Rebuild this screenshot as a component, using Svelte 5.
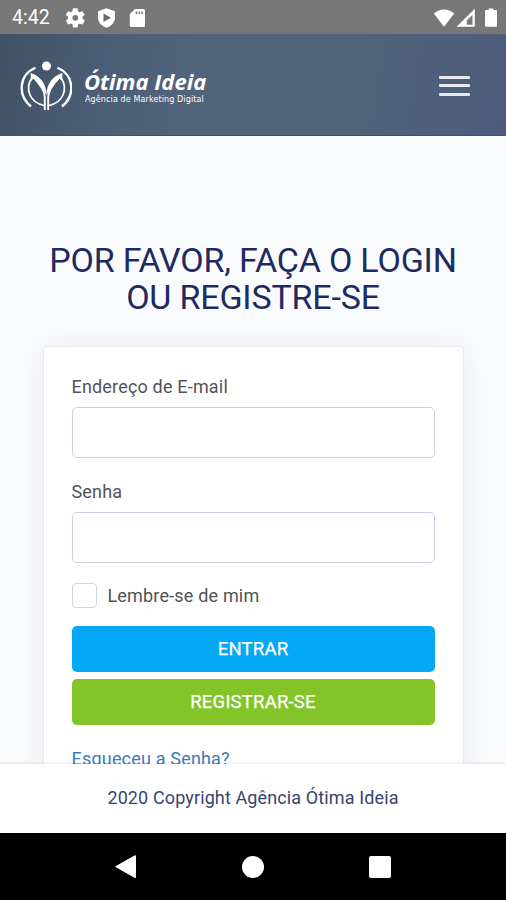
<script lang="ts">
	let email = $state('');
	let password = $state('');
	let remember = $state(false);
</script>

<div class="screen">
	<div class="status">
		<span class="clock">4:42</span>
		<svg class="status-left" width="82" height="22" viewBox="0 0 82 22" fill="#fff">
			<g transform="translate(-1.2 -.7) scale(.96)">
				<path fill-rule="evenodd" d="M19.4 13a7.500 7.500 0 0 0 0-2l2.100-1.600c.2-.2.2-.4.1-.6l-2-3.500c-.1-.2-.4-.3-.6-.2l-2.500 1a7.300 7.300 0 0 0-1.700-1l-.4-2.600c0-.3-.2-.5-.5-.5h-4c-.2 0-.4.200-.5.4l-.4 2.700a7.700 7.700 0 0 0-1.700 1l-2.500-1c-.2-.1-.5 0-.6.2l-2 3.500c-.1.200 0 .5.1.6L4.500 11a7.900 7.900 0 0 0 0 2l-2.100 1.600c-.2.200-.2.4-.1.600l2 3.500c.1.200.4.300.6.200l2.500-1a7.300 7.300 0 0 0 1.700 1l.4 2.600c0 .3.300.5.5.5h4c.3 0 .5-.2.500-.5l.4-2.600a7.700 7.700 0 0 0 1.700-1l2.500 1c.2.1.5 0 .6-.2l2-3.500c.1-.2.1-.5-.1-.6zM12 15a3 3 0 1 1 0-6 3 3 0 0 1 0 6z" />
			</g>
			<path d="M41.500 1.200l8.500 3v6.300c0 4.700-3.400 8.400-8.500 10.200-5.100-1.800-8.500-5.500-8.500-10.200V4.200z" />
			<path fill="#6b6b6b" d="M38.500 6.500l7.500 4.300-7.500 4.300z" />
			<path fill-rule="evenodd" d="M70 2h8.500q1.500 0 1.500 1.500v15q0 1.500-1.500 1.500H66.300q-1.500 0-1.500-1.500V7zM70.700 4.500v2.500h1.500V4.500zM73.500 4.500v2.500h1.500V4.500zM76.300 4.500v2.500h1.500V4.500z" />
		</svg>
		<svg class="status-right" width="64" height="22" viewBox="0 0 64 22" fill="#fff">
			<path d="M.8 6.600Q11 -1.800 21.300 6.600L11 19.800z" />
			<path fill-rule="evenodd" d="M23.500 19.800L41.800 1.800v18zM33.800 17.800h5.700V8l-5.700 5.500z" />
			<path d="M53 3h2.700V1.500h4.600V3H63q1 0 1 1v14.800q0 1-1 1H53q-1 0-1-1V4q0-1 1-1z" />
		</svg>
	</div>

	<header>
		<a class="brand" href="#home" aria-label="Ótima Ideia">
			<svg width="52" height="50" viewBox="0 0 52 50" fill="none" stroke="#fff">
				<circle cx="26.500" cy="5" r="4.500" fill="#fff" stroke="none" />
				<path stroke-width="2.300" d="M15.500 6.700C-1.500 14-2.500 34.500 11 45.500M37.500 6.700C54.500 14 55.500 34.500 42 45.500" />
				<path stroke-width="1.700" d="M11.800 17C4.500 28 10 41.500 24 44.500M41.200 17C48.500 28 43 41.500 29 44.500" />
				<path stroke-width="1.900" d="M24.800 49V36C24.800 29 20 23 13.500 16M28.200 49V36C28.200 29 33 23 39.500 16" />
				<path fill="#fff" stroke="none" d="M10.500 12C20 14.500 26.500 23 26.500 34 23.500 27.500 18 23 13.500 17.500L11 20zM42.500 12C33 14.500 26.500 23 26.500 34 29.500 27.500 35 23 39.500 17.500L42 20z" />
			</svg>
			<span class="wordmark">
				<span class="name">Ótima Ideia</span>
				<span class="tagline">Agência de Marketing Digital</span>
			</span>
		</a>
		<button class="menu" aria-label="Menu"><i></i><i></i><i></i></button>
	</header>

	<main>
		<h1>POR FAVOR, FAÇA O LOGIN<br />OU REGISTRE-SE</h1>
		<form onsubmit={(e) => e.preventDefault()}>
			<label for="email">Endereço de E-mail</label>
			<input class="field" id="email" type="email" bind:value={email} />
			<label for="password">Senha</label>
			<input class="field" id="password" type="password" bind:value={password} />
			<label class="remember">
				<input type="checkbox" bind:checked={remember} />
				<span>Lembre-se de mim</span>
			</label>
			<button class="btn enter">ENTRAR</button>
			<button class="btn register" type="button">REGISTRAR-SE</button>
			<a class="forgot" href="#forgot">Esqueceu a Senha?</a>
		</form>
	</main>

	<footer><span>2020 Copyright Agência Ótima Ideia</span></footer>

	<nav>
		<svg width="22" height="26" viewBox="0 0 22 26"><path fill="#fff" d="M1.300 11.800L19.500 1.500Q21 .8 21 2.500v20.400q0 1.700-1.500.9L1.300 13.600q-1.600-.9 0-1.800z" /></svg>
		<i class="home"></i>
		<i class="recent"></i>
	</nav>
</div>

<style>
	:global(body) {
		margin: 0;
	}
	.screen {
		display: flex;
		flex-direction: column;
		width: 506px;
		height: 900px;
		overflow: hidden;
		font-family: Roboto, sans-serif;
		background: #fafbfd;
	}
	.screen * {
		box-sizing: border-box;
	}
	.status {
		display: flex;
		align-items: center;
		flex: 0 0 34px;
		padding: 1px 9px 0 12px;
		background: #777;
		color: #fff;
	}
	.clock {
		width: 53px;
		font-size: 19.5px;
		line-height: 32px;
	}
	.status-right {
		margin-left: auto;
	}
	header {
		display: flex;
		align-items: center;
		justify-content: space-between;
		flex: 0 0 102px;
		padding: 2px 36px 0 20px;
		background: linear-gradient(100deg, #415165 0%, #4b5d76 20%, #52647c 38%, #52647c 65%, #4d5b7a 100%);
		border-bottom: 1px solid #43526a;
	}
	.brand {
		display: flex;
		align-items: center;
		gap: 12px;
		color: #fff;
		text-decoration: none;
	}
	.wordmark {
		display: flex;
		flex-direction: column;
		white-space: nowrap;
	}
	.name {
		font: italic 700 22px/26px "Open Sans", sans-serif;
	}
	.tagline {
		padding: 2px 0 0 1px;
		font: 400 8px/8px "DejaVu Sans", sans-serif;
		letter-spacing: 0.12px;
	}
	.menu {
		display: flex;
		flex-direction: column;
		gap: 5.500px;
		padding: 0;
		border: 0;
		background: none;
	}
	.menu i {
		width: 31px;
		height: 3px;
		border-radius: 1px;
		background: #e6eaf0;
	}
	main {
		display: flex;
		flex: 1;
		flex-direction: column;
		align-items: center;
		min-height: 0;
		padding-top: 106px;
		overflow: hidden;
	}
	h1 {
		flex: none;
		margin: 0 0 30px;
		color: #1d2b62;
		font-size: 34px;
		font-weight: 400;
		line-height: 37px;
		letter-spacing: -0.18px;
		text-align: center;
		white-space: nowrap;
	}
	form {
		display: flex;
		flex: none;
		flex-direction: column;
		width: 421px;
		height: 470px;
		padding: 27px 28px;
		border: 1px solid #e9ebed;
		border-radius: 4px;
		background: #fff;
		box-shadow: 0 0 34px rgba(30, 40, 60, 0.07);
	}
	label {
		color: #505356;
		font-size: 18px;
		line-height: 26px;
		letter-spacing: 0.18px;
		white-space: nowrap;
	}
	.field {
		width: 363px;
		height: 51px;
		margin: 7px 0 21px;
		padding: 0 14px;
		border: 1.500px solid #cad0e0;
		border-radius: 5px;
		background: #fff;
		font: 18px Roboto, sans-serif;
		outline: none;
	}
	.field + .remember {
		margin-top: -1px;
	}
	.remember {
		display: flex;
		align-items: center;
		gap: 11px;
		margin-bottom: 17px;
	}
	.remember input {
		appearance: none;
		width: 25px;
		height: 25px;
		margin: 0 0 1px;
		border: 1.500px solid #cfd4e2;
		border-radius: 4px;
		background: #fff;
	}
	.btn {
		flex: none;
		height: 46px;
		margin-bottom: 7px;
		padding: 0;
		border: 0;
		border-radius: 5px;
		color: #fff;
		font: 400 18.5px/46px Roboto, sans-serif;
		letter-spacing: 0.2px;
		-webkit-text-stroke: 0.25px #fff;
	}
	.enter {
		background: #05a8f5;
	}
	.register {
		background: #83c529;
	}
	.forgot {
		margin-top: 14px;
		color: #397bbd;
		font-size: 18px;
		line-height: 26px;
		letter-spacing: 0.18px;
		text-decoration: none;
	}
	footer {
		display: flex;
		align-items: center;
		justify-content: center;
		z-index: 1;
		flex: 0 0 69px;
		padding-bottom: 3px;
		background: #fff;
		box-shadow: 0 -1px 2px rgba(40, 50, 70, 0.12);
		color: #344570;
		font-size: 18px;
		letter-spacing: 0.12px;
	}
	nav {
		display: flex;
		z-index: 1;
		flex: 0 0 67px;
		align-items: center;
		justify-content: space-between;
		padding: 0 115px;
		background: #000;
	}
	.home {
		width: 22px;
		height: 22px;
		border-radius: 50%;
		background: #fff;
	}
	.recent {
		width: 22px;
		height: 22px;
		border-radius: 2px;
		background: #fff;
	}
</style>
